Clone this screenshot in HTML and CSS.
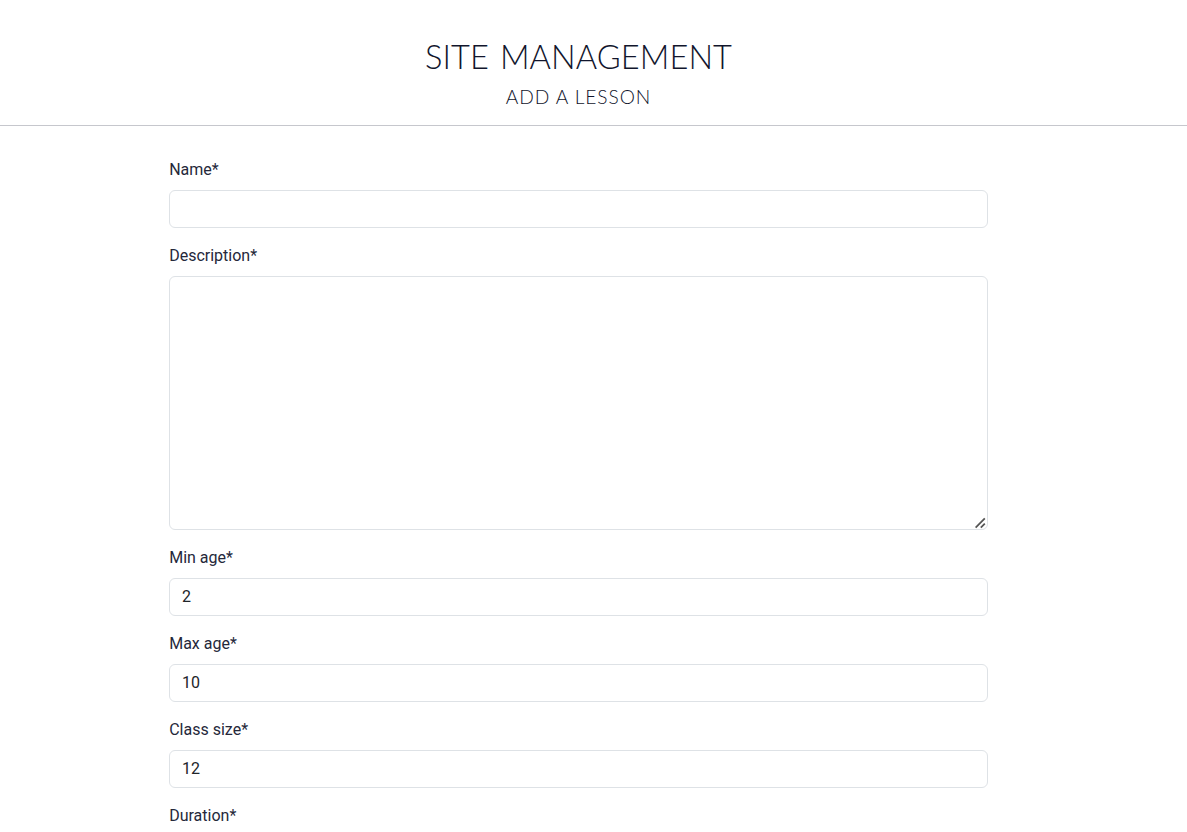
FILE: index.html
```html
<!DOCTYPE html>
<html lang="en">
<head>
<meta charset="utf-8">
<title>Site Management</title>
<link rel="stylesheet" href="styles.css">
</head>
<body>
<header class="page-header">
<h1 class="title">SITE MANAGEMENT</h1>
<h2 class="subtitle">ADD A LESSON</h2>
</header>
<form class="lesson-form">
<div class="field"><label class="label" for="name">Name*</label><input class="control" id="name" type="text"></div>
<div class="field area-field"><label class="label" for="description">Description*</label><textarea class="control area" id="description"></textarea><svg class="grip" viewBox="0 0 12 12" aria-hidden="true"><path d="M.6 10.6L9.8 1.4M5.8 10.6L9.8 6.6"/></svg></div>
<div class="field"><label class="label" for="min">Min age*</label><input class="control" id="min" type="text" value="2"></div>
<div class="field"><label class="label" for="max">Max age*</label><input class="control" id="max" type="text" value="10"></div>
<div class="field"><label class="label" for="size">Class size*</label><input class="control" id="size" type="text" value="12"></div>
<div class="field last"><span class="label">Duration*</span></div>
</form>
</body>
</html>
```
FILE: styles.css
```css
* { box-sizing: border-box; }
body {
  margin: 0;
  background: #fff;
  color: #25283a;
  font: 400 16px/24px Roboto, sans-serif;
}
.page-header {
  height: 126px;
  padding: 37px 30px 0 0;
  border-bottom: 1px solid #c6c7cd;
  text-align: center;
  font-family: Lato, sans-serif;
  color: #11152c;
}
.title, .subtitle { margin: 0; font-weight: 300; white-space: nowrap; }
.title { font-size: 32.6px; line-height: 40px; letter-spacing: 0.1px; word-spacing: 2px; }
.subtitle { margin-top: 8px; font-size: 19.2px; line-height: 24px; letter-spacing: 0.9px; }
.lesson-form { width: 819px; margin: 32px 0 0 169px; }
.field { margin-bottom: 16px; }
.last { margin-bottom: 0; }
.label { display: block; width: max-content; margin-bottom: 8px; padding-left: 0.2px; }
.last .label { margin-bottom: 0; }
.control {
  display: block;
  width: 100%;
  height: 38px;
  margin: 0;
  padding: 5px 12px 7px;
  border: 1px solid #dee2e6;
  border-radius: 6px;
  background: #fff;
  color: #212529;
  font: inherit;
}
.area { height: 254px; resize: none; }
.area-field { position: relative; }
.grip {
  position: absolute;
  right: 1px;
  bottom: 1px;
  width: 12px;
  height: 12px;
  fill: none;
  stroke: #555;
  stroke-width: 1.8;
}
```
